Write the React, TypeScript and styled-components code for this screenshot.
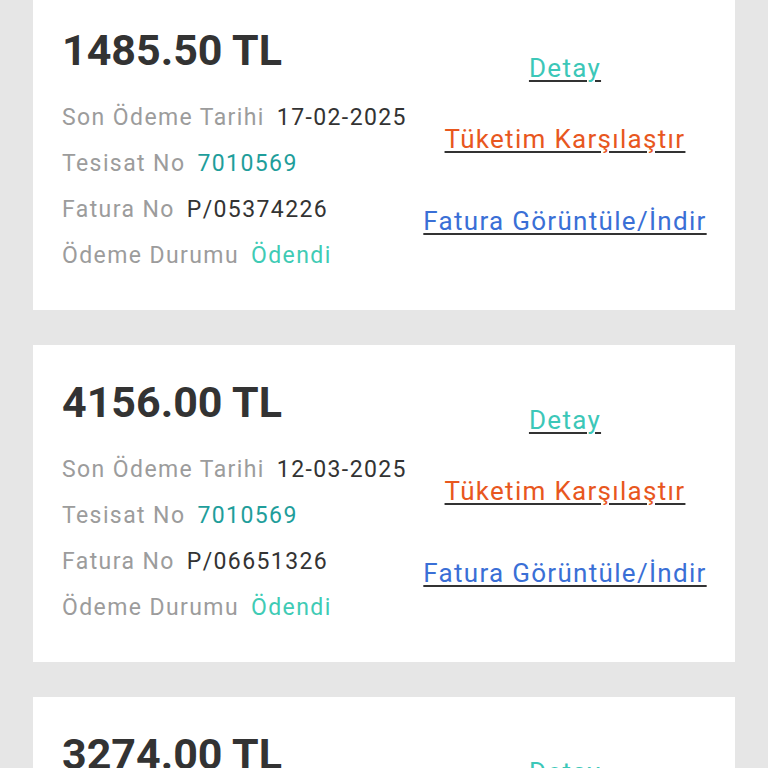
import * as React from 'react'
import styled, { createGlobalStyle } from 'styled-components'

const GlobalStyle = createGlobalStyle`
    html, body {
        margin: 0;
        padding: 0;
        background: #e6e6e6;
        font-family: Roboto, "Liberation Sans", sans-serif;
        overflow: hidden;
    }
`

const Page = styled.div`
    width: 768px;
    height: 768px;
    overflow: hidden;
    background: #e6e6e6;
`

const List = styled.div`
    display: flex;
    flex-direction: column;
    gap: 35px;
    padding: 0 33px;
    margin-top: -7px;
`

const Card = styled.div`
    display: grid;
    grid-template-columns: minmax(0, 1fr) 340px;
    background: #fff;
    height: 317px;
    box-sizing: border-box;
    padding: 31px 0 31px 29px;
    flex-shrink: 0;
`

const Info = styled.div`
    display: flex;
    flex-direction: column;
`

const Amount = styled.div`
    font-size: 43px;
    line-height: 52px;
    font-weight: bold;
    color: #333;
    margin-bottom: 19px;
`

const Row = styled.div`
    display: flex;
    gap: 12px;
    font-size: 23px;
    line-height: 46px;
    letter-spacing: 1.4px;
    white-space: nowrap;
`

const Label = styled.span`
    color: #9c9c9c;
`

const Value = styled.span<{ $tone?: 'dark' | 'teal' | 'mint' }>`
    color: ${p => p.$tone === 'teal' ? '#1f9e9b' : p.$tone === 'mint' ? '#3fcbb5' : '#333'};
`

const Actions = styled.div`
    display: flex;
    flex-direction: column;
    align-items: center;
    padding-top: 29px;
`

const ActionLink = styled.a<{ $color: string; $gap: number }>`
    display: block;
    font-size: 26px;
    line-height: 30px;
    letter-spacing: 1.3px;
    color: ${p => p.$color};
    text-decoration: underline;
    text-decoration-color: #333;
    text-decoration-thickness: 2px;
    text-underline-offset: 3px;
    margin-top: ${p => p.$gap}px;
    white-space: nowrap;
    cursor: pointer;
`

interface IBill {
    amount: string
    due: string
    install: string
    invoice: string
    status: string
}

const bills: IBill[] = [
    { amount: '1485.50 TL', due: '17-02-2025', install: '7010569', invoice: 'P/05374226', status: 'Ödendi' },
    { amount: '4156.00 TL', due: '12-03-2025', install: '7010569', invoice: 'P/06651326', status: 'Ödendi' },
    { amount: '3274.00 TL', due: '14-04-2025', install: '7010569', invoice: 'P/07912044', status: 'Ödendi' },
]

const BillCard = ({ bill }: { bill: IBill }) => (
    <Card>
        <Info>
            <Amount>{bill.amount}</Amount>
            <Row><Label>Son Ödeme Tarihi</Label><Value>{bill.due}</Value></Row>
            <Row><Label>Tesisat No</Label><Value $tone="teal">{bill.install}</Value></Row>
            <Row><Label>Fatura No</Label><Value>{bill.invoice}</Value></Row>
            <Row><Label>Ödeme Durumu</Label><Value $tone="mint">{bill.status}</Value></Row>
        </Info>
        <Actions>
            <ActionLink $color="#3cc7b8" $gap={0}>Detay</ActionLink>
            <ActionLink $color="#e8571e" $gap={41}>Tüketim Karşılaştır</ActionLink>
            <ActionLink $color="#3a6fd6" $gap={52}>Fatura Görüntüle/İndir</ActionLink>
        </Actions>
    </Card>
)

export default function App() {
    return (
        <Page>
            <GlobalStyle />
            <List>
                {bills.map(b => <BillCard key={b.amount} bill={b} />)}
            </List>
        </Page>
    )
}
